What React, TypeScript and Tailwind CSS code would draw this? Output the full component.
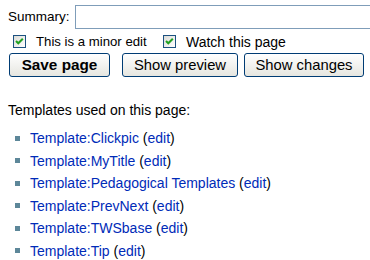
import React from "react";

const font = { fontFamily: '"Liberation Sans", Arial, sans-serif' };

function Check() {
  return (
    <span className="flex h-[13px] w-[13px] shrink-0 items-center justify-center border border-[#1c5180] bg-gradient-to-br from-[#dcdcd7] to-white">
      <svg width="11" height="11" viewBox="0 0 11 11">
        <path d="M2 5 L4.3 7.3 L8.8 2.8" fill="none" stroke="#21a121" strokeWidth="2" />
      </svg>
    </span>
  );
}

const items = ["Clickpic", "MyTitle", "Pedagogical Templates", "PrevNext", "TWSbase", "Tip"];

export default function App() {
  return (
    <div
      className="h-[260px] w-[370px] overflow-hidden bg-white pl-[8px] pt-[5px] text-[14px] text-black"
      style={font}
    >
      <div className="flex h-[24px] items-center">
        <span className="w-[67px] shrink-0 text-[13.5px] leading-[16px]">Summary:</span>
        <div className="h-[24px] w-[320px] shrink-0 border border-[#7f9db9] bg-white" />
      </div>
      <div className="mt-[6px] flex h-[13px] items-center pl-[5px] leading-[16px]">
        <Check />
        <span className="ml-[10px] w-[127px] shrink-0 whitespace-nowrap text-[13.2px]">This is a minor edit</span>
        <Check />
        <span className="ml-[10px] whitespace-nowrap">Watch this page</span>
      </div>
      <div className="mt-[5px] flex h-[24px] leading-[18px]">
        <button className="ml-[1px] flex h-[24px] w-[101px] items-center justify-center rounded-[3px] border border-[#003c74] bg-gradient-to-b from-white to-[#e6e6e0] text-[15.3px] font-bold">
          Save page
        </button>
        <button className="ml-[12px] flex h-[24px] w-[116px] items-center justify-center rounded-[3px] border border-[#003c74] bg-gradient-to-b from-white to-[#e6e6e0] text-[14.8px]">
          Show preview
        </button>
        <button className="ml-[6px] flex h-[24px] w-[120px] items-center justify-center rounded-[3px] border border-[#003c74] bg-gradient-to-b from-white to-[#e6e6e0] text-[14.8px]">
          Show changes
        </button>
      </div>
      <div className="mt-[25px] leading-[16px]">Templates used on this page:</div>
      <ul className="mt-[9px]">
        {items.map((t) => (
          <li key={t} className="flex h-[22.5px] items-center leading-[22.5px]">
            <span className="ml-[7px] h-[5px] w-[5px] shrink-0 bg-[#5d8799]" />
            <span className="ml-[10px] whitespace-nowrap">
              <a className="text-[#002bb8]">Template:{t}</a> (<a className="text-[#002bb8]">edit</a>)
            </span>
          </li>
        ))}
      </ul>
    </div>
  );
}
